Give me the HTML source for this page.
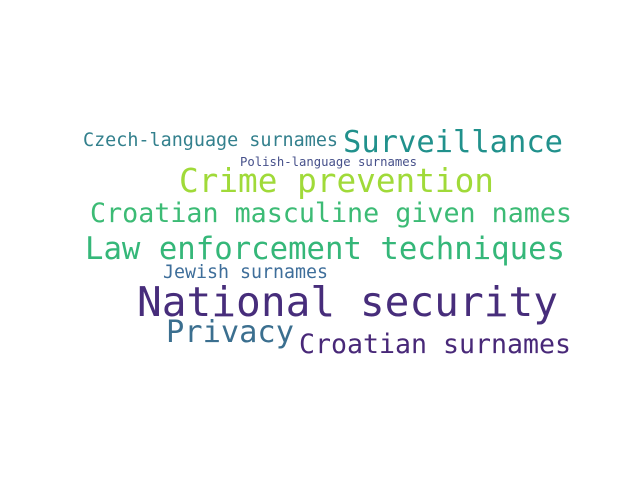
<!DOCTYPE html>
<html><head><style>html,body{margin:0;background:#fff}svg{display:block}</style></head><body>
<svg width="640" height="480" xmlns="http://www.w3.org/2000/svg" font-family="DejaVu Sans Mono, Liberation Mono, monospace">
<rect width="640" height="480" fill="#fff"/>
<text x="83" y="146" font-size="18.4" fill="#33808d" textLength="255" lengthAdjust="spacingAndGlyphs">Czech-language surnames</text>
<text x="343" y="152" font-size="30.5" fill="#21918c" textLength="220" lengthAdjust="spacingAndGlyphs">Surveillance</text>
<text x="240" y="166" font-size="12.2" fill="#46508a" textLength="177" lengthAdjust="spacingAndGlyphs">Polish-language surnames</text>
<text x="179" y="192" font-size="32.7" fill="#a0da39" textLength="315" lengthAdjust="spacingAndGlyphs">Crime prevention</text>
<text x="90" y="222" font-size="26.7" fill="#3cbb75" textLength="482" lengthAdjust="spacingAndGlyphs">Croatian masculine given names</text>
<text x="85" y="259" font-size="30.7" fill="#35b779" textLength="480" lengthAdjust="spacingAndGlyphs">Law enforcement techniques</text>
<text x="163" y="278" font-size="18.3" fill="#3e6e9a" textLength="165" lengthAdjust="spacingAndGlyphs">Jewish surnames</text>
<text x="137" y="316" font-size="41.1" fill="#472d7b" textLength="421" lengthAdjust="spacingAndGlyphs">National security</text>
<text x="166" y="342" font-size="30.4" fill="#3b6f8f" textLength="128" lengthAdjust="spacingAndGlyphs">Privacy</text>
<text x="299" y="353" font-size="26.6" fill="#482878" textLength="272" lengthAdjust="spacingAndGlyphs">Croatian surnames</text>
</svg>
</body></html>
